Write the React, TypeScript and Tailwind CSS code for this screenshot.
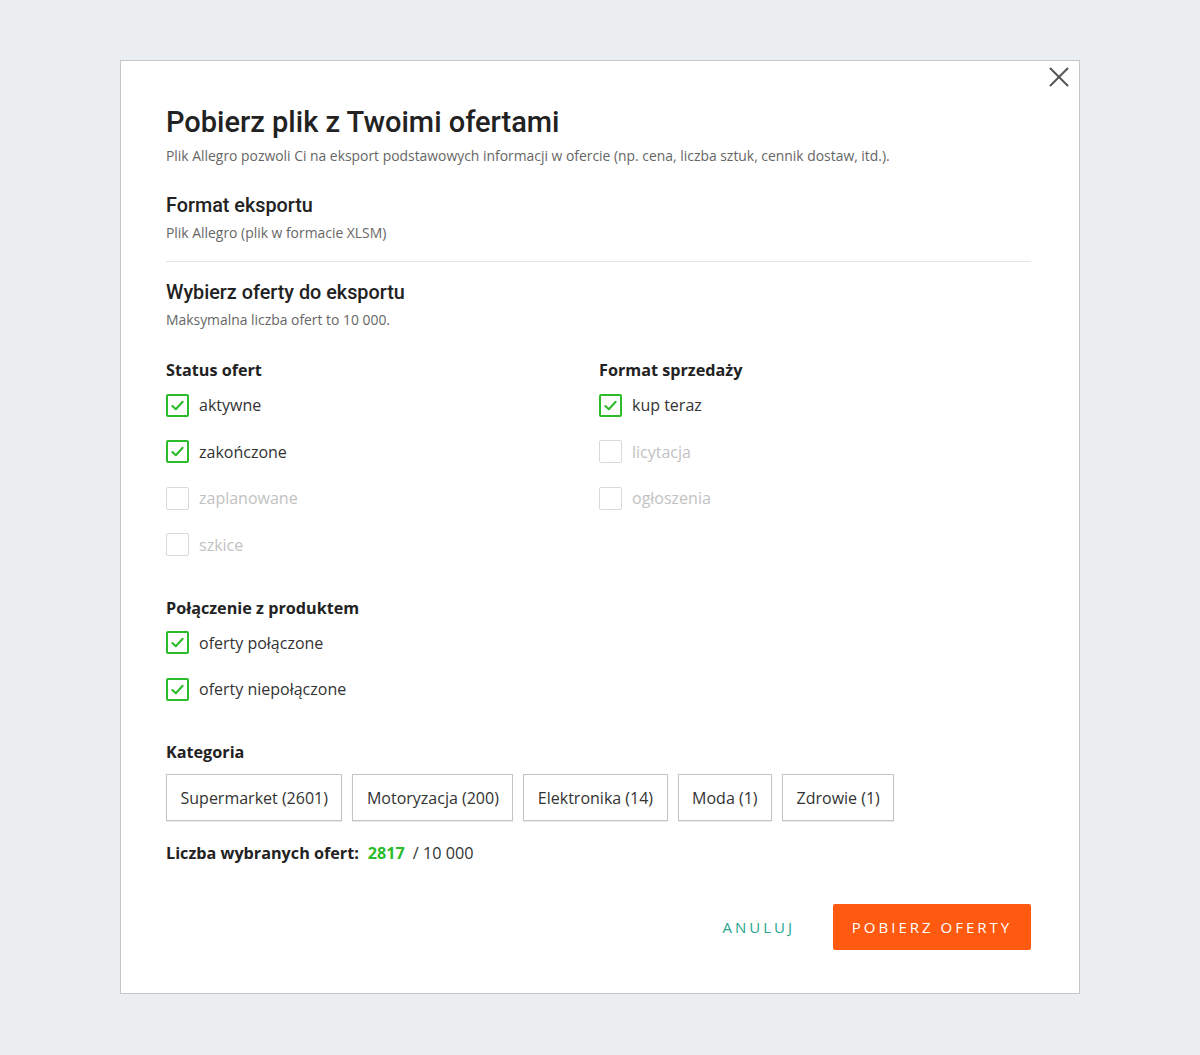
import React from 'react';

const body = { fontFamily: '"Open Sans", "Noto Sans", sans-serif' };
const head = { fontFamily: 'Roboto, "Noto Sans", sans-serif' };

interface CheckProps {
  label: string;
  checked?: boolean;
}

function Check({ label, checked = false }: CheckProps) {
  return (
    <label className="flex h-[24px] items-center gap-[10px]">
      {checked ? (
        <span className="flex h-[23px] w-[23px] items-center justify-center rounded-[2px] border-2 border-[#2bbb2b] bg-white">
          <svg viewBox="0 0 16 16" className="h-[15px] w-[15px]" fill="none" stroke="#2bbb2b" strokeWidth="2.2" strokeLinecap="round" strokeLinejoin="round">
            <path d="M2.5 8.5 L6.2 12 L13.5 4" />
          </svg>
        </span>
      ) : (
        <span className="h-[23px] w-[23px] rounded-[2px] border-[1.5px] border-[#d9d9d9] bg-white" />
      )}
      <span className={`text-[16px] leading-[24px] ${checked ? 'text-[#333]' : 'text-[#c2c2c2]'}`}>{label}</span>
    </label>
  );
}

function Group({ title, items }: { title: string; items: [string, boolean][] }) {
  return (
    <div>
      <h4 className="text-[16.2px] font-bold leading-[22px] text-[#222]">{title}</h4>
      <div className="mt-[12px] flex flex-col gap-[22.5px]">
        {items.map(([label, checked]) => (
          <Check key={label} label={label} checked={checked} />
        ))}
      </div>
    </div>
  );
}

const categories = ['Supermarket (2601)', 'Motoryzacja (200)', 'Elektronika (14)', 'Moda (1)', 'Zdrowie (1)'];

export default function App() {
  return (
    <div className="min-h-[1055px] w-full bg-[#ebeef1] pt-[60px]" style={body}>
      <div className="relative mx-auto h-[934px] w-[960px] border border-[#c6c6c6] bg-white pl-[45px] pr-[48px] pt-[44px]">
        <button className="absolute right-[4px] top-0 flex h-[32px] w-[32px] items-center justify-center">
          <svg viewBox="0 0 20 20" className="h-[20px] w-[20px]" fill="none" stroke="#555" strokeWidth="2" strokeLinecap="round">
            <line x1="1.5" y1="1.5" x2="18.5" y2="18.5" />
            <line x1="18.5" y1="1.5" x2="1.5" y2="18.5" />
          </svg>
        </button>

        <h2 className="text-[29px] font-medium leading-[34px] text-[#222]" style={head}>
          Pobierz plik z Twoimi ofertami
        </h2>
        <p className="mt-[8px] text-[13.9px] leading-[18px] text-[#666]">
          Plik Allegro pozwoli Ci na eksport podstawowych informacji w ofercie (np. cena, liczba sztuk, cennik dostaw, itd.).
        </p>

        <h3 className="mt-[29px] text-[19.8px] font-medium leading-[24px] text-[#222]" style={head}>
          Format eksportu
        </h3>
        <p className="mt-[6px] text-[13.9px] leading-[18px] text-[#666]">Plik Allegro (plik w formacie XLSM)</p>

        <div className="mt-[19px] border-t border-[#e3e3e3]" />

        <h3 className="mt-[19px] text-[19.8px] font-medium leading-[24px] text-[#222]" style={head}>
          Wybierz oferty do eksportu
        </h3>
        <p className="mt-[6px] text-[13.9px] leading-[18px] text-[#666]">Maksymalna liczba ofert to 10 000.</p>

        <div className="mt-[30px] grid grid-cols-[433px_1fr]">
          <Group
            title="Status ofert"
            items={[
              ['aktywne', true],
              ['zakończone', true],
              ['zaplanowane', false],
              ['szkice', false],
            ]}
          />
          <Group
            title="Format sprzedaży"
            items={[
              ['kup teraz', true],
              ['licytacja', false],
              ['ogłoszenia', false],
            ]}
          />
        </div>

        <div className="mt-[40px]">
          <Group
            title="Połączenie z produktem"
            items={[
              ['oferty połączone', true],
              ['oferty niepołączone', true],
            ]}
          />
        </div>

        <h4 className="mt-[40px] text-[16.2px] font-bold leading-[22px] text-[#222]">Kategoria</h4>
        <div className="mt-[11px] flex gap-[10px]">
          {categories.map((c) => (
            <button
              key={c}
              className="h-[47px] border border-[#c4c4c4] px-[13.5px] text-[16px] text-[#333] shadow-[0_1px_1px_rgba(0,0,0,0.08)]"
            >
              {c}
            </button>
          ))}
        </div>

        <p className="mt-[21px] text-[16.2px] leading-[22px] text-[#222]">
          <span className="font-bold">Liczba wybranych ofert:</span>
          <span className="ml-[9px] font-bold text-[#2bbb2b]">2817</span>
          <span className="ml-[8px] text-[#333]">/ 10 000</span>
        </p>

        <div className="mt-[40px] flex items-center justify-end gap-[20px]">
          <button className="px-[18px] text-[15px] font-medium uppercase tracking-[3px] text-[#27a58e]">Anuluj</button>
          <button className="h-[46px] w-[198px] rounded-[2px] bg-[#ff5a10] text-[15px] font-medium uppercase tracking-[3px] text-white">
            Pobierz oferty
          </button>
        </div>
      </div>
    </div>
  );
}
